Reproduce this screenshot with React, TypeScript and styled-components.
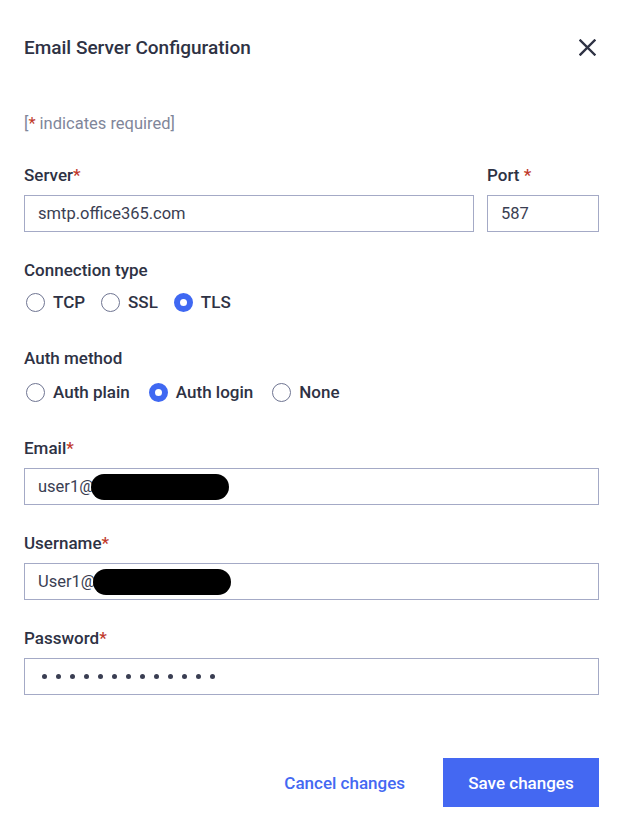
import React from 'react';
import styled, { createGlobalStyle } from 'styled-components';

const GlobalStyle = createGlobalStyle`
    html, body {
        margin: 0;
        padding: 0;
        background: #ffffff;
    }
    body {
        font-family: Roboto, "Liberation Sans", sans-serif;
        color: #2e3244;
    }
`;

const Dialog = styled.div`
    width: 622px;
    height: 828px;
    box-sizing: border-box;
    padding: 0 23px 0 24px;
    display: flex;
    flex-direction: column;
`;

const Header = styled.div`
    display: flex;
    flex-direction: row;
    justify-content: space-between;
    align-items: center;
    height: 94px;
`;

const Title = styled.h1`
    margin: 0;
    font-size: 19px;
    font-weight: 500;
    color: #2e3244;
`;

const CloseButton = styled.button`
    border: none;
    background: none;
    padding: 0;
    width: 20px;
    height: 20px;
    margin-right: 2px;
    display: flex;
    align-items: center;
    justify-content: center;
    cursor: pointer;
`;

const Hint = styled.div`
    font-size: 16.5px;
    color: #80869a;
    margin-top: 20px;
    height: 20px;
    line-height: 20px;
`;

const Star = styled.span`
    color: #c0392b;
`;

const Row = styled.div`
    display: flex;
    flex-direction: row;
    gap: 13px;
    margin-top: 31px;
`;

const Field = styled.div<{ $grow?: boolean; $width?: number; $top?: number }>`
    display: flex;
    flex-direction: column;
    flex: ${p => (p.$grow ? '1' : 'none')};
    width: ${p => (p.$width ? `${p.$width}px` : 'auto')};
    margin-top: ${p => (p.$top ? `${p.$top}px` : '0')};
`;

const Label = styled.label`
    font-size: 17px;
    font-weight: 500;
    color: #2e3244;
    height: 20px;
    line-height: 20px;
    margin-bottom: 10px;
`;

const InputBox = styled.div`
    box-sizing: border-box;
    height: 37px;
    border: 1px solid #a4aac6;
    padding: 0 13px;
    display: flex;
    align-items: center;
    font-size: 16.5px;
    color: #3a3e52;
`;

const Redacted = styled.span`
    display: inline-block;
    width: 138px;
    height: 26px;
    border-radius: 13px;
    background: #000;
    margin-left: -3px;
`;

const Dots = styled.span`
    display: flex;
    flex-direction: row;
    gap: 9px;
    padding-left: 4px;
`;

const Dot = styled.span`
    width: 5px;
    height: 5px;
    border-radius: 50%;
    background: #3a3e52;
`;

const Group = styled.div<{ $top: number }>`
    display: flex;
    flex-direction: column;
    margin-top: ${p => p.$top}px;
`;

const GroupLabel = styled.div<{ $gap: number }>`
    font-size: 17px;
    font-weight: 500;
    height: 20px;
    line-height: 20px;
    color: #2e3244;
    margin-bottom: ${p => p.$gap}px;
`;

const RadioRow = styled.div<{ $gap: number }>`
    display: flex;
    flex-direction: row;
    gap: ${p => p.$gap}px;
    padding-left: 2px;
`;

const RadioItem = styled.label`
    display: flex;
    align-items: center;
    gap: 8px;
    font-size: 17px;
    font-weight: 500;
    color: #2e3244;
    height: 20px;
`;

const RadioCircle = styled.span<{ $checked?: boolean }>`
    box-sizing: border-box;
    width: 19px;
    height: 19px;
    border-radius: 50%;
    border: ${p => (p.$checked ? '6px solid #3f68f2' : '1.5px solid #6f7592')};
    background: #fff;
`;

const Footer = styled.div`
    display: flex;
    flex-direction: row;
    justify-content: flex-end;
    align-items: center;
    gap: 38px;
    margin-top: 63px;
`;

const LinkButton = styled.button`
    border: none;
    background: none;
    font-family: inherit;
    font-size: 17px;
    font-weight: 500;
    color: #4468f2;
    padding: 0;
    cursor: pointer;
`;

const PrimaryButton = styled.button`
    border: none;
    background: #4468f2;
    color: #fff;
    font-family: inherit;
    font-size: 17px;
    font-weight: 500;
    width: 156px;
    height: 49px;
    cursor: pointer;
`;

const Radio: React.FC<{ label: string; checked?: boolean }> = ({ label, checked }) => (
    <RadioItem>
        <RadioCircle $checked={checked} />
        {label}
    </RadioItem>
);

const passwordDots = Array.from({ length: 13 }, (_, i) => i);

export default function App() {
    return (
        <>
            <GlobalStyle />
            <Dialog>
                <Header>
                    <Title>Email Server Configuration</Title>
                    <CloseButton aria-label="Close">
                        <svg width="17" height="17" viewBox="0 0 17 17">
                            <path d="M1.5 1.5 L15.5 15.5 M15.5 1.5 L1.5 15.5" stroke="#2e3244" strokeWidth="2.4" strokeLinecap="square" />
                        </svg>
                    </CloseButton>
                </Header>

                <Hint>[<Star>*</Star> indicates required]</Hint>

                <Row>
                    <Field $grow>
                        <Label>Server<Star>*</Star></Label>
                        <InputBox>smtp.office365.com</InputBox>
                    </Field>
                    <Field $width={112}>
                        <Label>Port <Star>*</Star></Label>
                        <InputBox>587</InputBox>
                    </Field>
                </Row>

                <Group $top={28}>
                    <GroupLabel $gap={12}>Connection type</GroupLabel>
                    <RadioRow $gap={16}>
                        <Radio label="TCP" />
                        <Radio label="SSL" />
                        <Radio label="TLS" checked />
                    </RadioRow>
                </Group>

                <Group $top={36}>
                    <GroupLabel $gap={14}>Auth method</GroupLabel>
                    <RadioRow $gap={19}>
                        <Radio label="Auth plain" />
                        <Radio label="Auth login" checked />
                        <Radio label="None" />
                    </RadioRow>
                </Group>

                <Field $top={36}>
                    <Label>Email<Star>*</Star></Label>
                    <InputBox>user1@<Redacted /></InputBox>
                </Field>

                <Field $top={28}>
                    <Label>Username<Star>*</Star></Label>
                    <InputBox>User1@<Redacted /></InputBox>
                </Field>

                <Field $top={28}>
                    <Label>Password<Star>*</Star></Label>
                    <InputBox>
                        <Dots>
                            {passwordDots.map(i => <Dot key={i} />)}
                        </Dots>
                    </InputBox>
                </Field>

                <Footer>
                    <LinkButton>Cancel changes</LinkButton>
                    <PrimaryButton>Save changes</PrimaryButton>
                </Footer>
            </Dialog>
        </>
    );
}
